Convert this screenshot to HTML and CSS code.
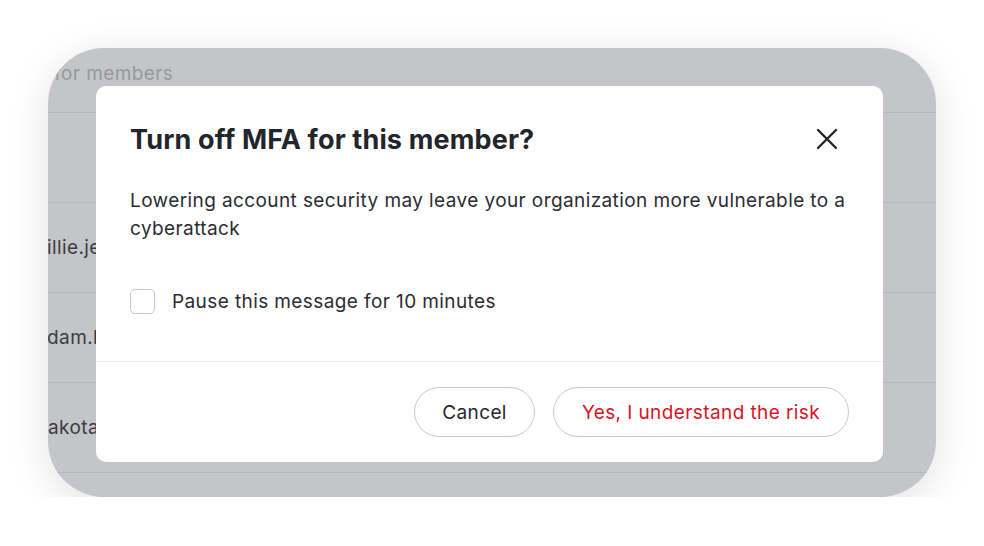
FILE: index.html
```html
<!DOCTYPE html>
<html lang="en">
<head>
    <meta charset="UTF-8">
    <meta name="viewport" content="width=device-width, initial-scale=1.0">
    <title>Turn off MFA</title>
    <link rel="stylesheet" href="styles.css">
</head>
<body>
  <div class="frame">
    <!-- Lista de miembros (detras del modal) -->
    <div class="members">
      <div class="search"><span>Search for members</span></div>
      <div class="row"></div>
      <div class="row"><span class="wide">willie.jenkins@example.com</span></div>
      <div class="row"><span>adam.brooks@example.com</span></div>
      <div class="row"><span>dakota.reyes@example.com</span></div>
      <div class="row"></div>
    </div>

    <!-- Modal -->
    <div class="modal">
      <div class="modal-body">
        <div class="modal-head">
          <h2>Turn off MFA for this member?</h2>
          <button class="close" aria-label="Close">
            <svg width="22" height="22" viewBox="0 0 22 22" fill="none" stroke="#1f2228" stroke-width="2.3" stroke-linecap="round">
              <path d="M2 2 L20 20 M20 2 L2 20"/>
            </svg>
          </button>
        </div>
        <p class="texto">Lowering account security may leave your organization more vulnerable to a cyberattack</p>
        <label class="check"><span class="box"></span> Pause this message for 10 minutes</label>
      </div>
      <div class="modal-foot">
        <button class="btn">Cancel</button>
        <button class="btn btn-risk">Yes, I understand the risk</button>
      </div>
    </div>
  </div>
</body>
</html>
```

FILE: styles.css
```css
body {
  font-family: 'Inter', 'Liberation Sans', sans-serif;
  background-color: #ffffff;
  margin: 0;
  padding: 0;
  color: #24272d;
}

/* Marco gris */
.frame {
  position: relative;
  width: 888px;
  height: 449px;
  margin: 48px 0 0 48px;
  background-color: #c4c5c9;
  border-radius: 56px;
  overflow: hidden;
  box-shadow: 0 8px 40px rgba(0, 0, 0, 0.12);
}

.members .search {
  height: 64px;
  border-bottom: 1px solid #b7b8bc;
  font-size: 19px;
  letter-spacing: 0.4px;
  color: #97989d;
  line-height: 52px;
}
.members .search span {
  margin-left: -65px;
}
.members .row {
  height: 89px;
  border-bottom: 1px solid #b7b8bc;
  display: flex;
  align-items: center;
  font-size: 19px;
  letter-spacing: 0.4px;
  color: #3b3c40;
}
.members .row span {
  margin-left: -12px;
}
.members .row span.wide {
  margin-left: -17px;
}

/* Modal */
.modal {
  position: absolute;
  left: 48px;
  top: 38px;
  width: 787px;
  height: 376px;
  background-color: #ffffff;
  border-radius: 10px;
  display: flex;
  flex-direction: column;
}
.modal-body {
  padding: 34px 34px 0 34px;
  flex: 1;
  border-bottom: 1px solid #ececee;
}
.modal-head {
  display: flex;
  justify-content: space-between;
  align-items: center;
  height: 38px;
}
.modal-head h2 {
  margin: 0;
  font-size: 27px;
  font-weight: 700;
  color: #22252b;
  letter-spacing: 0.15px;
}
.close {
  background: none;
  border: none;
  padding: 0;
  width: 22px;
  height: 22px;
  margin-right: 11px;
  cursor: pointer;
}
.texto {
  margin: 29px 0 0 0;
  font-size: 19px;
  letter-spacing: 0.4px;
  line-height: 28px;
  color: #2a2d33;
}
.check {
  display: flex;
  align-items: center;
  gap: 17px;
  margin-top: 46px;
  font-size: 19px;
  letter-spacing: 0.4px;
  color: #2a2d33;
}
.box {
  width: 23px;
  height: 23px;
  border: 1.5px solid #c6c9ce;
  border-radius: 5px;
  box-sizing: content-box;
}
.modal-foot {
  height: 100px;
  display: flex;
  justify-content: flex-end;
  align-items: center;
  gap: 18px;
  padding: 0 34px;
}
.btn {
  height: 50px;
  padding: 0 27px;
  border: 1.5px solid #c5c8cd;
  border-radius: 25px;
  background-color: #ffffff;
  font-family: inherit;
  font-size: 19px;
  letter-spacing: 0.4px;
  color: #24272d;
  cursor: pointer;
}
.btn-risk {
  padding: 0 28px;
  color: #d9141f;
}
```
